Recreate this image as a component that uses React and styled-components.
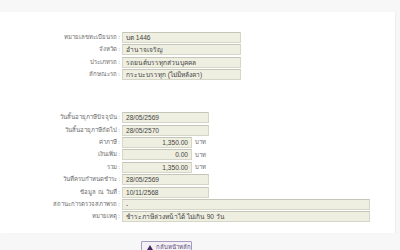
import React from "react";
import styled, { createGlobalStyle } from "styled-components";

const Global = createGlobalStyle`
  html, body { margin: 0; padding: 0; background: #f7f7f7; }
  body { font-family: Tahoma, "Liberation Sans", "Noto Sans", sans-serif; }
`;

const Page = styled.div`
  padding-top: 12px;
  width: 400px;
`;

const Panel = styled.div`
  width: 395px;
  background: #ffffff;
  padding: 20px 0 11px;
  box-sizing: border-box;
  display: flex;
  flex-direction: column;
  gap: 32px;
  box-shadow: 1px 0 1px rgba(0,0,0,0.04);
`;

const Group = styled.div`
  display: grid;
  grid-template-columns: 120px 1fr;
  column-gap: 2px;
  row-gap: 1.4px;
`;

const Label = styled.div`
  height: 11px;
  line-height: 11px;
  font-size: 6px;
  color: #6a6a6a;
  text-align: right;
  white-space: nowrap;
`;

const Field = styled.div`
  display: flex;
  align-items: center;
  gap: 3px;
`;

const Box = styled.div`
  width: ${(p) => p.$w}px;
  height: 11px;
  box-sizing: border-box;
  background: #efefe1;
  border: 1px solid #d6d6c8;
  border-top-color: #c6c6b8;
  padding: 0 3px;
  font-size: 6.6px;
  line-height: 9px;
  color: #444;
  text-align: ${(p) => (p.$num ? "right" : "left")};
  white-space: nowrap;
  overflow: hidden;
`;

const Unit = styled.span`
  font-size: 6px;
  color: #6a6a6a;
`;

const Footer = styled.div`
  display: flex;
  padding: 8px 0 0 141px;
`;

const BackButton = styled.button`
  display: flex;
  align-items: center;
  gap: 3px;
  width: 51px;
  height: 12px;
  padding: 0 0 0 5px;
  box-sizing: border-box;
  background: #f3f1f6;
  border: 1px solid #a99bbd;
  border-radius: 1px;
  font-family: inherit;
  font-size: 6px;
  line-height: 10px;
  white-space: nowrap;
  color: #5d4a75;
  cursor: pointer;
`;

const Row = ({ label, value, w, num, unit }) => (
  <>
    <Label>{label} :</Label>
    <Field>
      <Box $w={w} $num={num}>{value}</Box>
      {unit && <Unit>{unit}</Unit>}
    </Field>
  </>
);

const group1 = [
  ["หมายเลขทะเบียนรถ", "บต 1446"],
  ["จังหวัด", "อำนาจเจริญ"],
  ["ประเภทรถ", "รถยนต์บรรทุกส่วนบุคคล"],
  ["ลักษณะรถ", "กระบะบรรทุก (ไม่มีหลังคา)"],
];

const group2 = [
  { label: "วันสิ้นอายุภาษีปัจจุบัน", value: "28/05/2569", w: 87 },
  { label: "วันสิ้นอายุภาษีถัดไป", value: "28/05/2570", w: 87 },
  { label: "ค่าภาษี", value: "1,350.00", w: 70, num: true, unit: "บาท" },
  { label: "เงินเพิ่ม", value: "0.00", w: 70, num: true, unit: "บาท" },
  { label: "รวม", value: "1,350.00", w: 70, num: true, unit: "บาท" },
  { label: "วันที่ครบกำหนดชำระ", value: "28/05/2569", w: 87 },
  { label: "ข้อมูล ณ วันที่", value: "10/11/2568", w: 87 },
  { label: "สถานะการตรวจสภาพรถ", value: "-", w: 248 },
  { label: "หมายเหตุ", value: "ชำระภาษีล่วงหน้าได้ ไม่เกิน 90 วัน", w: 248 },
];

export default function App() {
  return (
    <Page>
      <Global />
      <Panel>
        <Group>
          {group1.map(([l, v]) => (
            <Row key={l} label={l} value={v} w={119} />
          ))}
        </Group>
        <Group>
          {group2.map((r) => (
            <Row key={r.label} {...r} />
          ))}
        </Group>
      </Panel>
      <Footer>
        <BackButton>
          <svg width="6" height="5" viewBox="0 0 6 5">
            <path d="M3 0 L6 5 L0 5 Z" fill="#4a2a5e" />
          </svg>
          กลับหน้าหลัก
        </BackButton>
      </Footer>
    </Page>
  );
}
